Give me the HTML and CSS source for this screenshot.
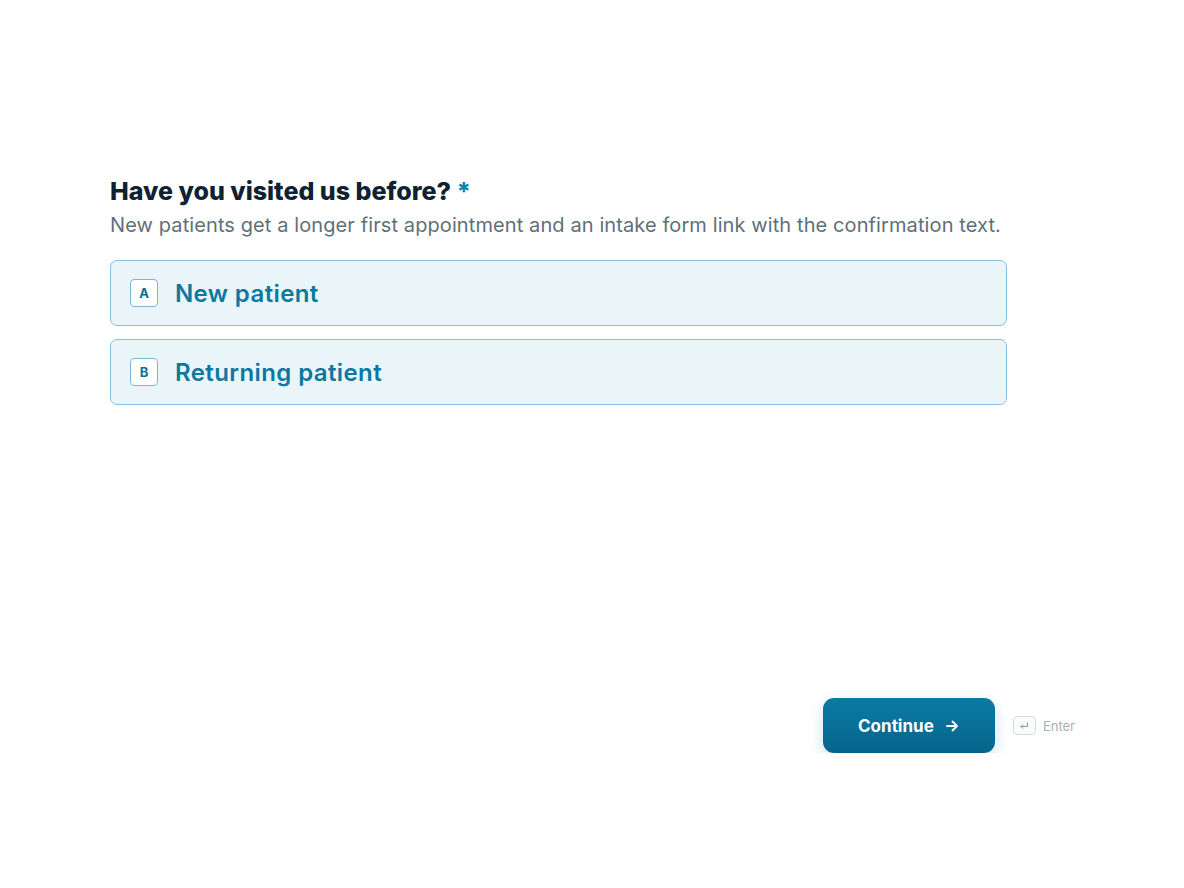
FILE: index.html
```html
<!DOCTYPE html>
<html lang="en">
<head>
    <meta charset="UTF-8">
    <meta name="viewport" content="width=device-width, initial-scale=1.0">
    <title>Patient Intake</title>
    <link rel="stylesheet" href="styles.css">
</head>
<body>
    <main class="form-step">
        <h1 class="question">Have you visited us before? <span class="required">*</span></h1>
        <p class="hint">New patients get a longer first appointment and an intake form link with the confirmation text.</p>

        <ul class="choices">
            <li class="choice">
                <span class="choice-key">A</span>
                <span class="choice-label">New patient</span>
            </li>
            <li class="choice">
                <span class="choice-key">B</span>
                <span class="choice-label">Returning patient</span>
            </li>
        </ul>

        <div class="actions">
            <button class="continue-btn">
                Continue
                <svg class="arrow" width="16" height="16" viewBox="0 0 16 16" fill="none" stroke="currentColor" stroke-width="1.8" stroke-linecap="round" stroke-linejoin="round">
                    <path d="M3 8h10M8.5 3.5 13 8l-4.5 4.5"/>
                </svg>
            </button>
            <span class="enter-hint">
                <span class="kbd">
                    <svg width="10" height="8" viewBox="0 0 10 8" fill="none" stroke="currentColor" stroke-width="1" stroke-linecap="round" stroke-linejoin="round">
                        <path d="M8.5 1v3.5H2M3.8 2.7 2 4.5l1.8 1.8"/>
                    </svg>
                </span>
                Enter
            </span>
        </div>
    </main>
</body>
</html>
```

FILE: styles.css
```css
* {
    margin: 0;
    padding: 0;
    box-sizing: border-box;
}

body {
    background: #ffffff;
    font-family: 'Inter', 'Noto Sans', sans-serif;
    color: #0f2233;
}

.form-step {
    width: 965px;
    margin-left: 110px;
    padding-top: 176px;
}

.question {
    font-size: 25px;
    line-height: 31px;
    font-weight: 800;
    color: #0f2233;
}

.required {
    color: #0b86b3;
}

.hint {
    margin-top: 6px;
    font-size: 20px;
    line-height: 24px;
    color: #5e7079;
    letter-spacing: 0.1px;
}

.choices {
    list-style: none;
    margin-top: 23px;
    width: 897px;
    display: flex;
    flex-direction: column;
    gap: 13px;
}

.choice {
    height: 66px;
    display: flex;
    align-items: center;
    gap: 17px;
    padding: 0 19px;
    background: #eaf5f9;
    border: 1px solid #86c0da;
    border-radius: 7px;
    cursor: pointer;
}

.choice-key {
    width: 28px;
    height: 28px;
    display: flex;
    align-items: center;
    justify-content: center;
    background: #ffffff;
    border: 1px solid #7fb7d1;
    border-radius: 4px;
    font-size: 13px;
    font-weight: 700;
    color: #0b6f96;
}

.choice-label {
    font-size: 24px;
    font-weight: 600;
    color: #0b78a2;
    letter-spacing: 0.4px;
}

.actions {
    margin-top: 293px;
    display: flex;
    justify-content: flex-end;
    align-items: center;
    gap: 18px;
}

.continue-btn {
    width: 172px;
    height: 55px;
    display: flex;
    align-items: center;
    justify-content: center;
    gap: 10px;
    border: none;
    border-radius: 11px;
    background: linear-gradient(180deg, #0a7ba5 0%, #05648a 100%);
    color: #ffffff;
    font-family: inherit;
    font-size: 17px;
    font-weight: 700;
    box-shadow: 0 6px 16px rgba(6, 100, 138, 0.2);
    cursor: pointer;
}

.enter-hint {
    display: flex;
    align-items: center;
    gap: 7px;
    font-size: 13px;
    color: #a9b0b5;
}

.kbd {
    width: 23px;
    height: 19px;
    display: flex;
    align-items: center;
    justify-content: center;
    border: 1px solid #d6dadd;
    border-radius: 4px;
    background: #fafbfb;
    color: #8a9399;
}
```
